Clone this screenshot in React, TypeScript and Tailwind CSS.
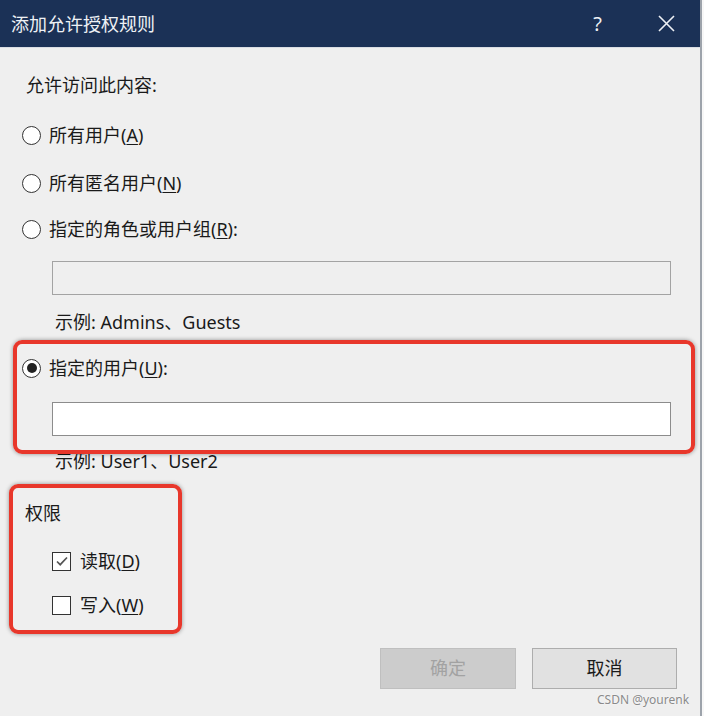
import React from "react";

const font = { fontFamily: '"Noto Sans", "Noto Sans CJK SC", sans-serif' };

function Radio({ checked }: { checked?: boolean }) {
  return (
    <span className="flex h-[19px] w-[19px] items-center justify-center rounded-full border-[1.5px] border-[#333] bg-white">
      {checked && <span className="h-[10px] w-[10px] rounded-full bg-[#222]" />}
    </span>
  );
}

function Checkbox({ checked }: { checked?: boolean }) {
  return (
    <span className="flex h-[19px] w-[19px] items-center justify-center border-[1.5px] border-[#333] bg-white">
      {checked && (
        <svg width="14" height="14" viewBox="0 0 14 14" fill="none">
          <path d="M2 7.5l3.2 3.2L12 3.5" stroke="#555" strokeWidth="1.7" />
        </svg>
      )}
    </span>
  );
}

function Label({ text, hot, colon }: { text: string; hot: string; colon?: boolean }) {
  return (
    <span className="text-[18px] leading-[24px] text-[#1a1a1a]">
      {text}(<span className="underline underline-offset-2">{hot}</span>){colon ? ":" : ""}
    </span>
  );
}

export default function App() {
  return (
    <div className="relative flex h-[716px] w-[704px] overflow-hidden bg-[#f7f7f7]" style={font}>
      <div className="flex w-[702px] flex-col border-r-2 border-[#9da3ab] bg-[#efefef]">
        {/* title bar */}
        <div className="flex h-[48px] shrink-0 items-center border-b border-[#d9dde3] bg-[#1b3156] pl-[11px] text-[#eef1f5]">
          <span className="text-[18px] leading-[24px]">添加允许授权规则</span>
          <span className="ml-auto mr-[56px] text-[20px]">?</span>
          <svg className="mr-[25px]" width="17" height="17" viewBox="0 0 17 17">
            <path d="M1 1l15 15M16 1L1 16" stroke="#eef1f5" strokeWidth="1.6" />
          </svg>
        </div>

        <div className="flex flex-col pl-[22px] pr-[29px]">
          <div className="mt-[25px] pl-[4px] text-[18px] leading-[24px] text-[#1a1a1a]">允许访问此内容:</div>

          <div className="mt-[26px] flex items-center gap-[8px]">
            <Radio />
            <Label text="所有用户" hot="A" />
          </div>
          <div className="mt-[24px] flex items-center gap-[8px]">
            <Radio />
            <Label text="所有匿名用户" hot="N" />
          </div>
          <div className="mt-[22px] flex items-center gap-[8px]">
            <Radio />
            <Label text="指定的角色或用户组" hot="R" colon />
          </div>

          <div className="ml-[30px] mt-[20px] h-[34px] border border-[#a3a3a3] bg-[#efefef]" />
          <div className="ml-[33px] mt-[15px] text-[18px] leading-[24px] text-[#1a1a1a]">示例: Admins、Guests</div>

          <div className="mt-[22px] flex items-center gap-[8px]">
            <Radio checked />
            <Label text="指定的用户" hot="U" colon />
          </div>
          <div className="ml-[30px] mt-[22px] h-[34px] border border-[#8c8c8c] bg-white" />
          <div className="ml-[33px] mt-[13px] text-[18px] leading-[24px] text-[#1a1a1a]">示例: User1、User2</div>

          <div className="ml-[3px] mt-[28px] text-[18px] leading-[24px] text-[#1a1a1a]">权限</div>
          <div className="ml-[30px] mt-[24px] flex items-center gap-[9px]">
            <Checkbox checked />
            <Label text="读取" hot="D" />
          </div>
          <div className="ml-[30px] mt-[20px] flex items-center gap-[9px]">
            <Checkbox />
            <Label text="写入" hot="W" />
          </div>

          <div className="mt-[31px] flex justify-end gap-[16px]">
            <button className="h-[41px] w-[136px] border border-[#bfbfbf] bg-[#cccccc] text-[18px] text-[#a2a2a2]">确定</button>
            <button className="mr-[-6px] h-[41px] w-[145px] border border-[#adadad] bg-[#e1e1e1] text-[18px] text-[#1a1a1a]">取消</button>
          </div>
        </div>
      </div>

      {/* annotation boxes */}
      <div className="absolute left-[13px] top-[340px] h-[114px] w-[682px] rounded-[9px] border-4 border-[#e8372b] shadow-[0_0_4px_rgba(0,0,0,0.4)]" />
      <div className="absolute left-[9px] top-[484px] h-[150px] w-[173px] rounded-[9px] border-4 border-[#e8372b] shadow-[0_0_4px_rgba(0,0,0,0.4)]" />

      <div className="absolute left-[597px] top-[691px] text-[12px] leading-[17px] text-[#8a8a8a] [text-shadow:0_0_2px_#fff]">CSDN @yourenk</div>
    </div>
  );
}
